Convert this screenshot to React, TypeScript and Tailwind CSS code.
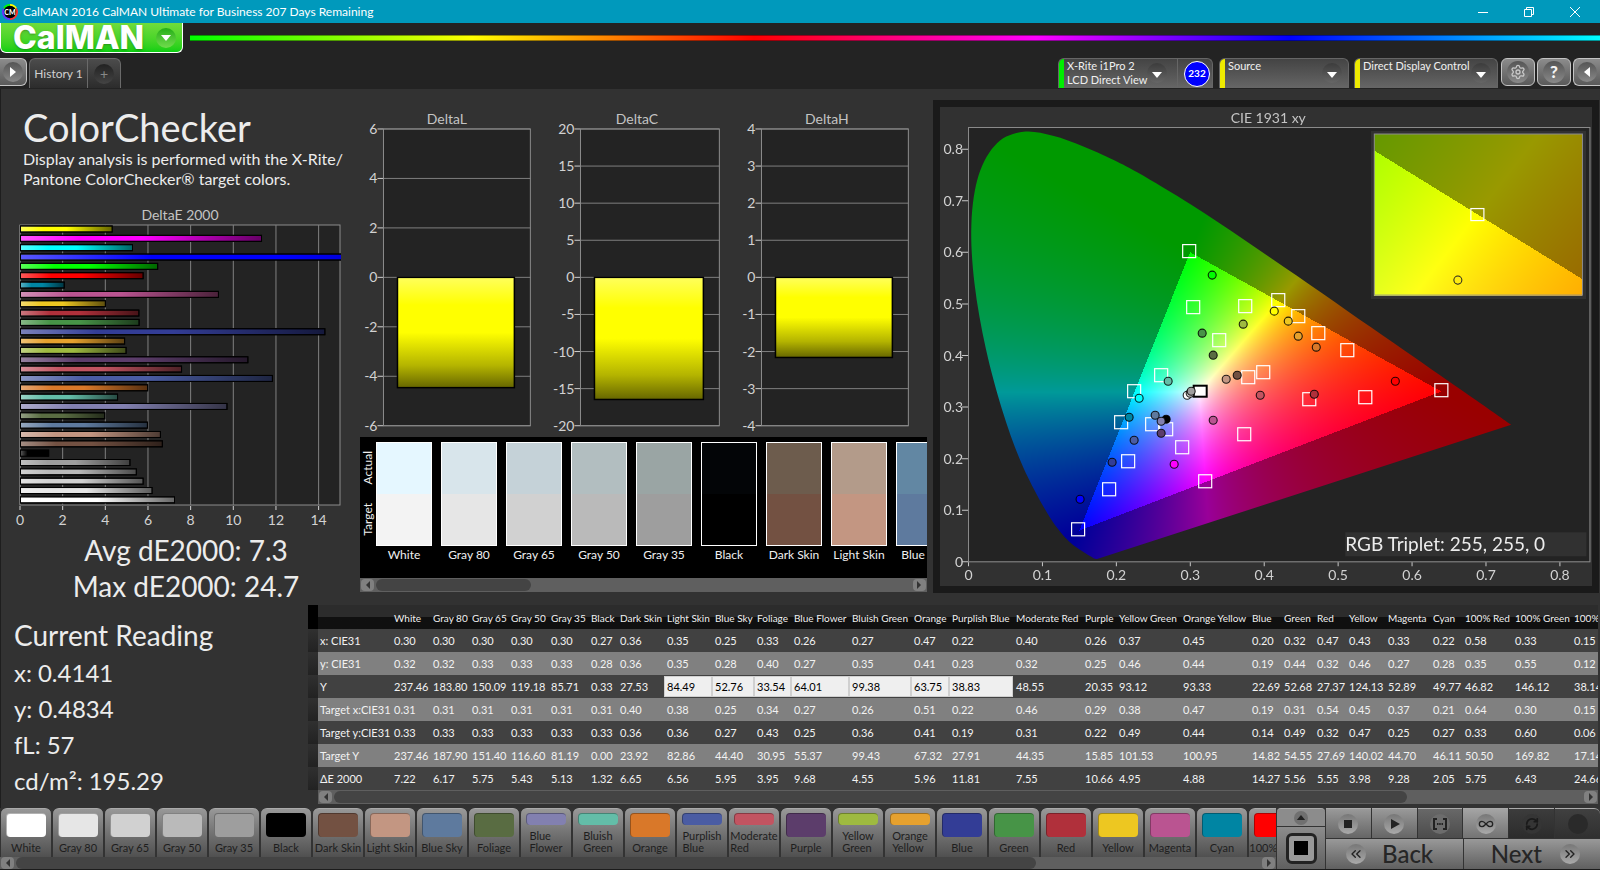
import { useEffect, useRef } from 'react';
import { Settings, ChevronsLeft, ChevronsRight, Infinity as InfinityIcon, RefreshCw } from 'lucide-react';
import clsx from 'clsx';

type Patch = { name: string; color: string; values: string[] };

const rowLabels = ['x: CIE31', 'y: CIE31', 'Y', 'Target x:CIE31', 'Target y:CIE31', 'Target Y', 'ΔE 2000'];

const patches: Patch[] = [
  { name: 'White', color: '#ffffff', values: ['0.30', '0.32', '237.46', '0.31', '0.33', '237.46', '7.22'] },
  { name: 'Gray 80', color: '#e6e6e6', values: ['0.30', '0.32', '183.80', '0.31', '0.33', '187.90', '6.17'] },
  { name: 'Gray 65', color: '#d1d1d1', values: ['0.30', '0.33', '150.09', '0.31', '0.33', '151.40', '5.75'] },
  { name: 'Gray 50', color: '#bababa', values: ['0.30', '0.33', '119.18', '0.31', '0.33', '116.60', '5.43'] },
  { name: 'Gray 35', color: '#9e9e9e', values: ['0.30', '0.33', '85.71', '0.31', '0.33', '81.19', '5.13'] },
  { name: 'Black', color: '#000000', values: ['0.27', '0.28', '0.33', '0.31', '0.33', '0.00', '1.32'] },
  { name: 'Dark Skin', color: '#735142', values: ['0.36', '0.36', '27.53', '0.40', '0.36', '23.92', '6.65'] },
  { name: 'Light Skin', color: '#c39682', values: ['0.35', '0.35', '84.49', '0.38', '0.36', '82.86', '6.56'] },
  { name: 'Blue Sky', color: '#5e7a9e', values: ['0.25', '0.28', '52.76', '0.25', '0.27', '44.40', '5.95'] },
  { name: 'Foliage', color: '#596c42', values: ['0.33', '0.40', '33.54', '0.34', '0.43', '30.95', '3.95'] },
  { name: 'Blue Flower', color: '#8280b0', values: ['0.26', '0.27', '64.01', '0.27', '0.25', '55.37', '9.68'] },
  { name: 'Bluish Green', color: '#63bda8', values: ['0.27', '0.35', '99.38', '0.26', '0.36', '99.43', '4.55'] },
  { name: 'Orange', color: '#d97829', values: ['0.47', '0.41', '63.75', '0.51', '0.41', '67.32', '5.96'] },
  { name: 'Purplish Blue', color: '#4a5ca3', values: ['0.22', '0.23', '38.83', '0.22', '0.19', '27.91', '11.81'] },
  { name: 'Moderate Red', color: '#c25461', values: ['0.40', '0.32', '48.55', '0.46', '0.31', '44.35', '7.55'] },
  { name: 'Purple', color: '#5c3d6b', values: ['0.26', '0.25', '20.35', '0.29', '0.22', '15.85', '10.66'] },
  { name: 'Yellow Green', color: '#9eba40', values: ['0.37', '0.46', '93.12', '0.38', '0.49', '101.53', '4.95'] },
  { name: 'Orange Yellow', color: '#e6a12e', values: ['0.45', '0.44', '93.33', '0.47', '0.44', '100.95', '4.88'] },
  { name: 'Blue', color: '#333d96', values: ['0.20', '0.19', '22.69', '0.19', '0.14', '14.82', '14.27'] },
  { name: 'Green', color: '#479447', values: ['0.32', '0.44', '52.68', '0.31', '0.49', '54.55', '5.56'] },
  { name: 'Red', color: '#b0303b', values: ['0.47', '0.32', '27.37', '0.54', '0.32', '27.69', '5.55'] },
  { name: 'Yellow', color: '#edc721', values: ['0.43', '0.46', '124.13', '0.45', '0.47', '140.02', '3.98'] },
  { name: 'Magenta', color: '#ba5491', values: ['0.33', '0.27', '52.89', '0.37', '0.25', '44.70', '9.28'] },
  { name: 'Cyan', color: '#0085a3', values: ['0.22', '0.28', '49.77', '0.21', '0.27', '46.11', '2.05'] },
  { name: '100% Red', color: '#ff0000', values: ['0.58', '0.35', '46.82', '0.64', '0.33', '50.50', '5.75'] },
  { name: '100% Green', color: '#00ff00', values: ['0.33', '0.55', '146.12', '0.30', '0.60', '169.82', '6.43'] },
  { name: '100% Blue', color: '#0000ff', values: ['0.15', '0.12', '38.14', '0.15', '0.06', '17.14', '24.66'] },
];

const columnWidths = [39, 39, 39, 40, 40, 29, 47, 48, 42, 37, 58, 62, 38, 64, 69, 34, 64, 69, 32, 33, 32, 39, 45, 32, 50, 59, 60];

// top to bottom, 100% primaries first
const deltaE = [
  { color: '#ffff00', value: 4.3 },
  { color: '#ff00ff', value: 11.3 },
  { color: '#00ffff', value: 5.25 },
  ...[...patches].reverse().map((p) => ({ color: p.color, value: Number(p.values[6]) })),
];

const swatches = [
  { name: 'White', actual: '#e5f7ff', target: '#f3f3f3' },
  { name: 'Gray 80', actual: '#d8e5eb', target: '#e6e6e6' },
  { name: 'Gray 65', actual: '#c5d2d8', target: '#d1d1d1' },
  { name: 'Gray 50', actual: '#b2bec0', target: '#bababa' },
  { name: 'Gray 35', actual: '#9aa5a4', target: '#9e9e9e' },
  { name: 'Black', actual: '#030507', target: '#000000' },
  { name: 'Dark Skin', actual: '#6d5c4d', target: '#735142' },
  { name: 'Light Skin', actual: '#b39b8a', target: '#c39682' },
  { name: 'Blue Sky', actual: '#6287a3', target: '#5e7a9e' },
];

const locus = [
  [0.1741, 0.005], [0.1714, 0.0051], [0.1644, 0.0109], [0.1566, 0.0177], [0.144, 0.0297], [0.1355, 0.0399],
  [0.1241, 0.0578], [0.1096, 0.0868], [0.0913, 0.1327], [0.0687, 0.2007], [0.0454, 0.295], [0.0235, 0.4127],
  [0.0082, 0.5384], [0.0039, 0.6548], [0.0139, 0.7502], [0.0389, 0.812], [0.0743, 0.8338], [0.1142, 0.8262],
  [0.1547, 0.8059], [0.1929, 0.7816], [0.2296, 0.7543], [0.3016, 0.6923], [0.3731, 0.6245], [0.4441, 0.5547],
  [0.5125, 0.4866], [0.5752, 0.4242], [0.627, 0.3725], [0.6658, 0.334], [0.6915, 0.3083], [0.719, 0.2809],
  [0.7347, 0.2653],
];

const targets = [
  [249, 144], [253, 200], [305, 199], [279, 233], [221, 268], [194, 284], [181, 315], [212, 317], [226, 322],
  [242, 340], [188, 354], [169, 382], [138, 422], [265, 374], [304, 327], [308, 270], [323, 265], [338, 193],
  [358, 209], [378, 226], [407, 243], [369, 292], [425, 290], [501, 283],
];

const readings: [number, number, string][] = [
  [272, 168, '#00ff00'], [262, 226, '#479447'], [303, 217, '#9eba40'], [273, 248, '#596c42'], [334, 204, '#ffff00'],
  [228, 274, '#63bda8'], [199, 291, '#00ffff'], [189, 310, '#0085a3'], [215, 308, '#5e7a9e'], [226, 312, '#000000'],
  [221, 314, '#8280b0'], [221, 326, '#5c3d6b'], [194, 333, '#4a5ca3'], [172, 355, '#333d96'], [140, 392, '#0000ff'],
  [234, 357, '#ff00ff'], [273, 313, '#ba5491'], [320, 288, '#c25461'], [286, 272, '#c39682'], [297, 268, '#735142'],
  [247, 288, '#ffffff'], [250, 286, '#d1d1d1'], [251, 284, '#9e9e9e'], [348, 214, '#edc721'], [358, 229, '#e6a12e'],
  [376, 240, '#d97829'], [455, 274, '#ff0000'], [374, 287, '#b0303b'],
];

const CIE_W = 652;
const CIE_H = 479;
const cieX = (x: number) => 28.5 + 738.7 * x;
const cieY = (y: number) => 454.5 - 515.4 * y;

// xy -> brightest linear RGB, dimmed when out of gamut
function xyToRgb(x: number, y: number) {
  const X = x / y;
  const Z = (1 - x - y) / y;
  const lin = [
    3.2406 * X - 1.5372 - 0.4986 * Z,
    -0.9689 * X + 1.8758 + 0.0415 * Z,
    0.0557 * X - 0.204 + 1.057 * Z,
  ];
  const max = Math.max(...lin);
  const dim = Math.min(...lin) < 0 ? 0.6 : 1;
  return lin.map((c) => 255 * dim * Math.max(0, c / max));
}

function paint(w: number, h: number, toXy: (px: number, py: number) => [number, number]) {
  const c = document.createElement('canvas');
  c.width = w;
  c.height = h;
  const ctx = c.getContext('2d')!;
  const img = ctx.createImageData(w, h);
  for (let j = 0; j < h; j++) {
    for (let i = 0; i < w; i++) {
      const [x, y] = toXy(i + 0.5, j + 0.5);
      if (y <= 0.0005) continue;
      const k = (j * w + i) * 4;
      const [r, g, b] = xyToRgb(x, y);
      img.data[k] = r;
      img.data[k + 1] = g;
      img.data[k + 2] = b;
      img.data[k + 3] = 255;
    }
  }
  ctx.putImageData(img, 0, 0);
  return c;
}

function CieCanvas() {
  const ref = useRef<HTMLCanvasElement>(null);

  useEffect(() => {
    const ctx = ref.current!.getContext('2d')!;
    ctx.fillStyle = '#232323';
    ctx.fillRect(28, 20, 621, 434);

    const pts = locus.map(([x, y]) => [cieX(x), cieY(y)]);
    ctx.save();
    ctx.beginPath();
    ctx.moveTo(pts[0][0], pts[0][1]);
    for (let i = 0; i < pts.length - 1; i++) {
      const a = pts[Math.max(i - 1, 0)];
      const b = pts[i];
      const c = pts[i + 1];
      const d = pts[Math.min(i + 2, pts.length - 1)];
      ctx.bezierCurveTo(
        b[0] + (c[0] - a[0]) / 6, b[1] + (c[1] - a[1]) / 6,
        c[0] - (d[0] - b[0]) / 6, c[1] - (d[1] - b[1]) / 6,
        c[0], c[1],
      );
    }
    ctx.closePath();
    ctx.clip();
    ctx.drawImage(paint(CIE_W, CIE_H, (px, py) => [(px - 28.5) / 738.7, (454.5 - py) / 515.4]), 0, 0);
    ctx.restore();

    // magnified area around the selected patch
    ctx.fillStyle = '#313131';
    ctx.fillRect(431, 24, 215, 168);
    ctx.drawImage(paint(208, 162, (px, py) => [0.4193 + (px - 103) / 3690, 0.5053 - (py - 80) / 2870]), 434, 27);
  }, []);

  return <canvas ref={ref} width={CIE_W} height={CIE_H} className="block w-full" />;
}

function CieChart() {
  return (
    <section className="relative border-[7px] border-[#1a1a1a] bg-[#313131]">
      <CieCanvas />
      <svg viewBox="0 0 652 479" className="absolute inset-0 h-full w-full" fill="#d2d2d2" fontSize="14">
        <text x="328" y="16" textAnchor="middle" fill="#c4c4c4">CIE 1931 xy</text>
        <rect x="28.5" y="20.5" width="621" height="434" fill="none" stroke="#8c8c8c" />
        {[0, 1, 2, 3, 4, 5, 6, 7, 8].map((t) => (
          <g key={t}>
            <path d={`M${cieX(t / 10)} 455v4M28 ${cieY(t / 10)}h-6`} stroke="#c8c8c8" />
            <text x={cieX(t / 10)} y="473" textAnchor="middle">{t / 10}</text>
            <text x="23" y={cieY(t / 10) + 5} textAnchor="end">{t / 10}</text>
          </g>
        ))}
        <g fill="none" stroke="#fff" strokeWidth="1.2">
          {targets.map(([x, y], i) => <rect key={i} x={x - 6.5} y={y - 6.5} width="13" height="13" />)}
        </g>
        <rect x="253.5" y="278.5" width="13" height="11" fill="#fff" stroke="#000" strokeWidth="2" />
        <g stroke="#000" strokeOpacity="0.85" strokeWidth="1.1">
          {readings.map(([x, y, color], i) => <circle key={i} cx={x} cy={y} r="4" fill={color} />)}
        </g>
        <rect x="434" y="27" width="208" height="161" fill="none" stroke="#8c8c8c" />
        <rect x="530.5" y="101.5" width="13" height="12" fill="none" stroke="#fff" strokeWidth="1.2" />
        <circle cx="517.5" cy="173" r="4" fill="none" stroke="#222" />
        <rect x="405" y="425" width="241" height="24" fill="#313131" />
        <text x="405" y="444" fontSize="19" fill="#ececec">RGB Triplet: 255, 255, 0</text>
      </svg>
    </section>
  );
}

function DeltaEChart() {
  const x = (v: number) => 19 + 21.33 * v;
  return (
    <svg viewBox="0 0 354 326" className="block w-full" fill="#d2d2d2" fontSize="14">
      <defs>
        <linearGradient id="shadeX">
          <stop offset="0" stopColor="#fff" stopOpacity="0.35" />
          <stop offset="0.25" stopColor="#fff" stopOpacity="0" />
          <stop offset="0.5" stopColor="#000" stopOpacity="0" />
          <stop offset="1" stopColor="#000" stopOpacity="0.6" />
        </linearGradient>
        <clipPath id="plotE"><rect x="19" y="20" width="321" height="286" /></clipPath>
      </defs>
      <text x="179" y="16" textAnchor="middle" fill="#c4c4c4">DeltaE 2000</text>
      <rect x="19" y="21" width="320" height="280" fill="#232323" stroke="#8c8c8c" />
      {[0, 2, 4, 6, 8, 10, 12, 14].map((t) => (
        <g key={t}>
          <path d={`M${x(t)} 21v280`} stroke="#808080" />
          <path d={`M${x(t)} 302v4`} stroke="#d0d0d0" />
          <text x={x(t)} y="321" textAnchor="middle">{t}</text>
        </g>
      ))}
      <g clipPath="url(#plotE)" stroke="#000">
        {deltaE.map((b, i) => (
          <g key={i}>
            <rect x="19.5" y={22 + i * 9.34} width={b.value * 21.33} height="6" fill={b.color} />
            <rect x="19.5" y={22 + i * 9.34} width={b.value * 21.33} height="6" fill="url(#shadeX)" />
          </g>
        ))}
      </g>
    </svg>
  );
}

type DeltaProps = { title: string; max: number; step: number; left: number; right: number; value: number };

function DeltaChart({ title, max, step, left, right, value }: DeltaProps) {
  const y = (v: number) => 177.5 - (v / max) * 148.5;
  const ticks = [];
  for (let t = max; t >= -max; t -= step) ticks.push(t);
  const bar = { x: left + 14, y: y(0), width: right - left - 30, height: y(value) - y(0) };
  return (
    <svg viewBox="0 0 190 336" className="block w-1/3" fill="#d2d2d2" fontSize="14">
      <defs>
        <linearGradient id={`shade${title}`} x2="0" y2="1">
          <stop offset="0" stopColor="#ffff5c" />
          <stop offset="0.25" stopColor="#ffff00" />
          <stop offset="0.5" stopColor="#ffff00" />
          <stop offset="0.8" stopColor="#b4b400" />
          <stop offset="1" stopColor="#666600" />
        </linearGradient>
      </defs>
      <text x="92" y="24" textAnchor="middle" fill="#c4c4c4">{title}</text>
      <rect x={left} y="29" width={right - left} height="297" fill="#232323" />
      {ticks.map((t) => (
        <g key={t}>
          <path d={`M${left} ${y(t)}H${right}`} stroke="#808080" />
          <path d={`M${left - 6} ${y(t)}h6`} stroke="#d0d0d0" />
          <text x={left - 6} y={y(t) + 5} textAnchor="end">{t}</text>
        </g>
      ))}
      <rect x={left} y="29" width={right - left} height="297" fill="none" stroke="#8c8c8c" />
      <rect {...bar} fill={`url(#shade${title})`} stroke="#000" strokeWidth="1.5" />
    </svg>
  );
}

function ScrollBar({ thumb, className }: { thumb: string; className?: string }) {
  return (
    <div className={clsx('flex items-center gap-0.5 bg-[#5f5f5f] px-px', className)}>
      <button aria-label="Scroll left" className="flex h-3 w-[13px] shrink-0 items-center justify-center rounded-sm bg-[#808080]">
        <svg viewBox="0 0 6 8" className="h-2 w-1.5 fill-[#333]"><path d="M5 0v8L1 4z" /></svg>
      </button>
      <div className="flex h-3 flex-1"><div className={clsx('h-full rounded-full bg-[#444]', thumb)} /></div>
      <button aria-label="Scroll right" className="flex h-3 w-[13px] shrink-0 items-center justify-center rounded-sm bg-[#808080]">
        <svg viewBox="0 0 6 8" className="h-2 w-1.5 fill-[#333]"><path d="M1 0v8l4-4z" /></svg>
      </button>
    </div>
  );
}

function SwatchStrip() {
  return (
    <section>
      <div className="flex h-[141px] overflow-hidden bg-black pt-[5px] text-[12px] text-[#f0f0f0]">
        <div className="flex h-[104px] w-4 shrink-0 flex-col">
          <div className="flex h-1/2 items-center justify-center"><span className="rotate-180 leading-4 [writing-mode:vertical-rl]">Actual</span></div>
          <div className="flex h-1/2 items-center justify-center"><span className="rotate-180 leading-4 [writing-mode:vertical-rl]">Target</span></div>
        </div>
        <div className="flex min-w-0 flex-1 gap-[9px] overflow-hidden">
          {swatches.map((s) => (
            <figure key={s.name} className="w-14 shrink-0">
              <div className="flex h-[104px] flex-col border border-white">
                <div className="flex-1" style={{ background: s.actual }} />
                <div className="flex-1" style={{ background: s.target }} />
              </div>
              <figcaption className="text-center leading-[18px] whitespace-nowrap">{s.name}</figcaption>
            </figure>
          ))}
        </div>
      </div>
      <ScrollBar className="h-[14px]" thumb="w-[29%]" />
    </section>
  );
}

function DataTable() {
  return (
    <section className="min-w-0 flex-1 overflow-hidden pr-0.5">
      <div className="overflow-hidden">
        <table className="w-[1312px] table-fixed border-collapse text-left text-[11px] leading-4 text-[#f2f2f2]">
          <colgroup>
            <col className="w-[10px]" />
            <col className="w-[73px]" />
            {columnWidths.map((w, i) => <col key={i} style={{ width: w }} />)}
          </colgroup>
          <thead>
            <tr className="h-6 bg-linear-to-b from-[#2c2c2c] from-50% to-[#101010] to-50%">
              <th className="bg-black" />
              <th />
              {patches.map((p) => <th key={p.name} className="pt-0.5 pl-[3px] text-[10px] font-normal whitespace-nowrap">{p.name}</th>)}
            </tr>
          </thead>
          <tbody>
            {rowLabels.map((label, r) => (
              <tr key={label} className={clsx('h-[23px]', r % 2 ? 'bg-[#808080]' : 'bg-[#414141]')}>
                <td className="bg-linear-to-b from-[#303030] to-[#222]" />
                <th className="pl-0.5 font-normal whitespace-nowrap">{label}</th>
                {patches.map((p, c) => (
                  <td key={p.name} className={r === 2 && c > 6 && c < 14 ? 'p-0' : 'py-0 pl-[3px]'}>
                    {r === 2 && c > 6 && c < 14 ? (
                      <input aria-label={`${p.name} Y`} defaultValue={p.values[r]} className="block h-[21px] w-full border border-[#d0d0d0] bg-[#efefef] pl-0.5 text-black" />
                    ) : p.values[r]}
                  </td>
                ))}
              </tr>
            ))}
          </tbody>
        </table>
      </div>
      <ScrollBar className="ml-[10px] h-[14px]" thumb="w-[86%]" />
    </section>
  );
}

function MenuTab({ bar, className, children }: { bar: string; className: string; children: React.ReactNode }) {
  return (
    <button className={clsx('flex h-[30px] overflow-hidden rounded-t-md border border-b-0 border-[#666] bg-linear-to-b from-[#444] to-[#666] text-left text-[11px] leading-[14px] text-[#f0f0f0]', className)}>
      <span className={clsx('w-[5px] shrink-0 self-stretch', bar)} />
      <span className="flex-1 pl-[3px] whitespace-nowrap">{children}</span>
      <span className="mt-1 mr-1.5 flex h-5 w-5 shrink-0 items-center justify-center rounded-full bg-linear-to-b from-[#3c3c3c] to-[#666]">
        <svg viewBox="0 0 10 6" className="mt-1 h-1.5 w-2.5 fill-white"><path d="M0 0h10L5 6z" /></svg>
      </span>
    </button>
  );
}

const roundButton = 'flex h-7 items-center justify-center border border-[#c4c4c4] bg-linear-to-b from-[#8c8c8c] to-[#5a5a5a]';
const knob = 'flex h-5 w-5 items-center justify-center rounded-full bg-linear-to-b from-[#555] to-[#8a8a8a]';

function Header() {
  return (
    <header>
      <div className="flex h-[23px] items-center bg-[#0099bc] text-white">
        <svg viewBox="0 0 16 16" className="ml-0.5 h-4 w-4">
          <path d="M8 1a7 7 0 0 1 6 3.500" stroke="#ff0" strokeWidth="2" fill="none" />
          <path d="M14 4.500a7 7 0 0 1-6 10.500" stroke="#f33" strokeWidth="2" fill="none" />
          <path d="M8 15a7 7 0 0 1-6-10.500" stroke="#63f" strokeWidth="2" fill="none" />
          <path d="M2 4.500A7 7 0 0 1 8 1" stroke="#0f0" strokeWidth="2" fill="none" />
          <circle cx="8" cy="8" r="6.200" />
          <text x="8" y="10.500" textAnchor="middle" fontSize="7" fontWeight="900" fill="#fff">CM</text>
        </svg>
        <h1 className="flex-1 pl-[5px] text-[12px] leading-[23px]">CalMAN 2016 CalMAN Ultimate for Business 207 Days Remaining</h1>
        <div className="flex pr-0.5">
          <button aria-label="Minimize" className="flex w-[46px] justify-center"><svg viewBox="0 0 10 10" className="h-2.5 w-2.5" stroke="#fff"><path d="M0 5.500h10" /></svg></button>
          <button aria-label="Restore" className="flex w-[46px] justify-center"><svg viewBox="0 0 10 10" className="h-2.5 w-2.5" stroke="#fff" fill="none"><path d="M.5 2.500h7v7h-7zM2.500 2.500v-2h7v7h-2" /></svg></button>
          <button aria-label="Close" className="flex w-[46px] justify-center"><svg viewBox="0 0 10 10" className="h-2.5 w-2.5" stroke="#fff"><path d="M0 0l10 10M10 0L0 10" /></svg></button>
        </div>
      </div>

      <div className="flex h-[30px] gap-[7px]">
        <button className="flex w-[183px] items-center justify-between rounded-b-md border border-t-0 border-white bg-linear-to-b from-[#6fdc3c] to-[#06cf12] pr-1.5 pl-3 text-white">
          <span className="font-['Inter',sans-serif] text-[32px] leading-7 font-extrabold text-shadow-md">CalMAN</span>
          <span className="flex h-5 w-5 items-center justify-center rounded-full bg-linear-to-b from-[#1fae14] to-[#6fdc4c]">
            <svg viewBox="0 0 10 6" className="h-1.5 w-2.5 fill-white"><path d="M0 0h10L5 6z" /></svg>
          </span>
        </button>
        <div className="mt-3 h-1.5 flex-1 border-y border-black/40 bg-[linear-gradient(90deg,#0f0,#ff0_20%,#f00_40%,#f0f_60%,#00f_78%,#0ff)]" />
      </div>

      <div className="flex h-[36px] items-end justify-between">
        <div className="flex h-[31px]">
          <button aria-label="Expand" className={clsx(roundButton, 'w-[27px] rounded-r-md border-l-0')}>
            <span className={knob}><svg viewBox="0 0 6 10" className="h-2.5 w-1.5 fill-white"><path d="M0 0v10l6-5z" /></svg></span>
          </button>
          <div className="ml-0.5 flex h-[30px] w-[92px] rounded-t-md border border-b-0 border-[#6a6a6a] bg-linear-to-b from-[#4c4c4c] to-[#2c2c2c] text-[#d0d0d0]">
            <button className="w-[58px] border-r border-[#6a6a6a] text-[12px] whitespace-nowrap">History 1</button>
            <button aria-label="Add tab" className="flex flex-1 items-center justify-center">
              <span className="flex h-5 w-5 items-center justify-center rounded-full bg-linear-to-b from-[#222] to-[#444] text-[14px] text-[#888]">+</span>
            </button>
          </div>
        </div>
        <div className="flex h-[31px]">
          <MenuTab bar="bg-[#00ee00]" className="w-[119px] rounded-tr-none border-r-0 pr-1">X-Rite i1Pro 2<br />LCD Direct View</MenuTab>
          <div className="flex h-[30px] w-[36px] items-center justify-center rounded-tr-md border border-b-0 border-[#666] bg-linear-to-b from-[#444] to-[#666] pl-1">
            <span className="flex h-[26px] w-[26px] items-center justify-center rounded-full border border-white bg-[#0000ff] text-[10px] font-bold text-white">232</span>
          </div>
          <MenuTab bar="bg-[#eeea00]" className="ml-1.5 w-[130px]">Source</MenuTab>
          <MenuTab bar="bg-[#eeea00]" className="ml-[5px] w-[144px]">Direct Display Control</MenuTab>
          <button aria-label="Settings" className={clsx(roundButton, 'ml-[3px] w-[34px] rounded-md')}>
            <span className="flex h-[22px] w-[22px] items-center justify-center rounded-full bg-linear-to-b from-[#555] to-[#8a8a8a]"><Settings className="h-4 w-4 text-[#c8c8c8]" /></span>
          </button>
          <button aria-label="Help" className={clsx(roundButton, 'ml-0.5 w-[34px] rounded-md')}>
            <span className="flex h-[22px] w-[22px] items-center justify-center rounded-full bg-linear-to-b from-[#555] to-[#8a8a8a] text-[17px] font-black text-[#f4f4f4]">?</span>
          </button>
          <button aria-label="Collapse" className={clsx(roundButton, 'ml-0.5 w-[27px] rounded-l-md border-r-0')}>
            <span className={knob}><svg viewBox="0 0 6 10" className="h-2.5 w-1.5 fill-white"><path d="M6 0v10L0 5z" /></svg></span>
          </button>
        </div>
      </div>
    </header>
  );
}

const twoLine = ['Blue Flower', 'Bluish Green', 'Purplish Blue', 'Moderate Red', 'Yellow Green', 'Orange Yellow'];
const transport = 'flex h-[30px] flex-1 items-center justify-center border-t border-[#aaa]';
const disc = 'flex h-5 w-5 items-center justify-center rounded-full bg-linear-to-b from-[#777] to-[#aaa] text-[#222]';

function Footer() {
  return (
    <footer className="flex border-b border-[#1c1c1c] bg-[#333]">
      <div className="min-w-0 flex-1">
        <div className="flex gap-0.5 overflow-hidden pl-px">
          {patches.map((p) => (
            <button key={p.name} className="flex h-[49px] w-[50px] shrink-0 flex-col items-center rounded-t-md border-t border-[#aaa] bg-linear-to-b from-[#989898] to-[#505050] pt-1 text-[11px] leading-3 text-[#1e1e1e]">
              <span className={clsx('w-10 shrink-0 rounded border-t border-l border-black/30', twoLine.includes(p.name) ? 'h-3' : 'h-6')} style={{ background: p.color }} />
              <span className={clsx('pt-[5px]', twoLine.includes(p.name) ? 'max-w-12 text-left' : 'whitespace-nowrap')}>
                {twoLine.includes(p.name) ? <>{p.name.split(' ')[0]}<br />{p.name.split(' ')[1]}</> : p.name}
              </span>
            </button>
          ))}
        </div>
        <ScrollBar className="h-3" thumb="w-[82%]" />
      </div>
      <div className="ml-px flex w-12 flex-col">
        <button aria-label="More" className="flex h-[18px] items-center justify-center rounded-t border-t border-[#aaa] bg-[#8c8c8c]">
          <span className="flex h-3.5 w-3.5 items-center justify-center rounded-full bg-[#707070]"><svg viewBox="0 0 10 6" className="h-[5px] w-2.5 fill-[#222]"><path d="M0 6h10L5 0z" /></svg></span>
        </button>
        <button aria-label="Pattern window" className="mt-px flex flex-1 items-center justify-center bg-linear-to-b from-[#8c8c8c] to-[#606060]">
          <span className="flex h-[31px] w-[31px] items-center justify-center rounded-md border-[3px] border-[#222] bg-[#999]"><span className="h-3.5 w-3.5 bg-black" /></span>
        </button>
      </div>
      <div className="ml-px flex w-[274px] flex-col gap-px">
        <div className="flex gap-px">
          <button aria-label="Stop" className={clsx(transport, 'bg-linear-to-b from-[#999] to-[#666]')}><span className={disc}><span className="h-2 w-2 bg-[#222]" /></span></button>
          <button aria-label="Play" className={clsx(transport, 'bg-linear-to-b from-[#999] to-[#666]')}><span className={disc}><svg viewBox="0 0 9 10" className="ml-0.5 h-2.5 w-[9px] fill-[#222]"><path d="M0 0v10l9-5z" /></svg></span></button>
          <button aria-label="Read series" className={clsx(transport, 'bg-linear-to-b from-[#686868] to-[#4c4c4c]')}>
            <span className="flex h-5 w-5 items-center justify-center rounded-full bg-[#6c6c6c]">
              <svg viewBox="0 0 14 12" className="h-3 w-3.5" fill="none" stroke="#222" strokeWidth="2"><path d="M4 1H1v10h3M10 1h3v10h-3" /><path d="M4 6h1.500M6.200 6h1.500M8.500 6H10" /></svg>
            </span>
          </button>
          <button aria-label="Read continuous" className={clsx(transport, 'bg-linear-to-b from-[#a4a4a4] to-[#747474]')}><span className={disc}><InfinityIcon className="h-4 w-4" /></span></button>
          <button aria-label="Refresh" className={clsx(transport, 'border-[#444] bg-linear-to-b from-[#3c3c3c] to-[#2c2c2c]')}><span className="flex h-5 w-5 items-center justify-center rounded-full bg-[#353535]"><RefreshCw className="h-3.5 w-3.5 text-[#1a1a1a]" strokeWidth={3} /></span></button>
          <button aria-label="Record" className={clsx(transport, 'rounded-tr-md border-[#555] bg-linear-to-b from-[#404040] to-[#303030]')}><span className="h-5 w-5 rounded-full bg-[#2a2a2a]" /></button>
        </div>
        <div className="flex gap-px text-[24px] leading-[30px] font-medium text-[#262626]">
          <button className="flex h-[30px] flex-1 items-center gap-4 bg-linear-to-b from-[#999] to-[#606060] pl-5"><span className={disc}><ChevronsLeft className="h-4 w-4" /></span>Back</button>
          <button className="flex h-[30px] flex-1 items-center justify-end gap-[18px] bg-linear-to-b from-[#999] to-[#606060] pr-5">Next<span className={disc}><ChevronsRight className="h-4 w-4" /></span></button>
        </div>
      </div>
    </footer>
  );
}

export default function App() {
  return (
    <div className="flex min-h-screen flex-col overflow-hidden bg-[#232323] font-['Lato','Noto_Sans',sans-serif]">
      <Header />
      <main className="flex-1 border-l border-[#1e1e1e] bg-[#323232] text-[#ececec]">
        <div className="flex items-start pt-[11px]">
          <section className="w-[354px] shrink-0">
            <div className="pt-[5px] pl-[22px]">
              <h2 className="text-[38px] leading-[44px]">ColorChecker</h2>
              <p className="text-[16px] leading-5 whitespace-nowrap">Display analysis is performed with the X-Rite/<br />Pantone ColorChecker® target colors.</p>
            </div>
            <div className="mt-[15px]"><DeltaEChart /></div>
            <p className="mt-0.5 pl-4 text-center text-[28px] leading-9">Avg dE2000: 7.3<br />Max dE2000: 24.7</p>
          </section>
          <section className="min-w-0 flex-[572]">
            <div className="flex pr-0.5">
              <DeltaChart title="DeltaL" max={6} step={2} left={28.5} right={175.5} value={-4.46} />
              <DeltaChart title="DeltaC" max={20} step={5} left={35.5} right={174.5} value={-16.46} />
              <DeltaChart title="DeltaH" max={4} step={1} left={26.5} right={173.5} value={-2.16} />
            </div>
            <div className="pt-px pl-[5px]"><SwatchStrip /></div>
          </section>
          <div className="ml-1.5 min-w-0 flex-[667] pr-px"><CieChart /></div>
        </div>
        <div className="flex pt-px">
          <section className="w-[307px] shrink-0 pl-[13px]">
            <h3 className="pt-2.5 text-[28px] leading-10">Current Reading</h3>
            <dl className="text-[24px] leading-9">
              <div className="flex gap-1.5"><dt>x:</dt><dd>0.4141</dd></div>
              <div className="flex gap-1.5"><dt>y:</dt><dd>0.4834</dd></div>
              <div className="flex gap-1.5"><dt>fL:</dt><dd>57</dd></div>
              <div className="flex gap-1.5"><dt>cd/m²:</dt><dd>195.29</dd></div>
            </dl>
          </section>
          <DataTable />
        </div>
      </main>
      <Footer />
    </div>
  );
}
